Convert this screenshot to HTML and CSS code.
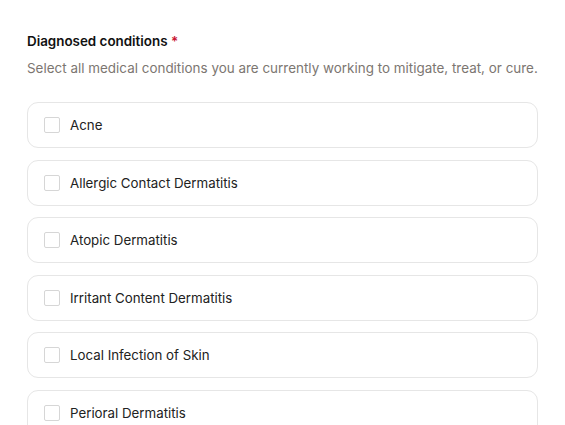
FILE: index.html
```html
<!DOCTYPE html>
<html>
<head>
<meta charset="utf-8">
<link rel="stylesheet" href="styles.css">
</head>
<body>
<div class="field">
  <div class="label">Diagnosed conditions <span class="req">*</span></div>
  <div class="hint">Select all medical conditions you are currently working to mitigate, treat, or cure.</div>
  <div class="options">
    <label class="option"><span class="box"></span><span class="text">Acne</span></label>
    <label class="option"><span class="box"></span><span class="text">Allergic Contact Dermatitis</span></label>
    <label class="option"><span class="box"></span><span class="text">Atopic Dermatitis</span></label>
    <label class="option"><span class="box"></span><span class="text">Irritant Content Dermatitis</span></label>
    <label class="option"><span class="box"></span><span class="text">Local Infection of Skin</span></label>
    <label class="option"><span class="box"></span><span class="text">Perioral Dermatitis</span></label>
  </div>
</div>
</body>
</html>
```
FILE: styles.css
```css
html, body {
  margin: 0;
  background: #fff;
}
body {
  font-family: Inter, "Liberation Sans", sans-serif;
  overflow: hidden;
}
.field {
  width: 511px;
  padding: 32px 0 0 27px;
}
.label {
  font-size: 13.4px;
  font-weight: 600;
  color: #111;
  line-height: 18px;
}
.req {
  color: #c8102e;
}
.hint {
  margin-top: 9px;
  font-size: 13.45px;
  color: #7c7671;
  line-height: 18px;
  white-space: nowrap;
}
.options {
  margin-top: 25px;
  display: flex;
  flex-direction: column;
  gap: 11.5px;
}
.option {
  display: flex;
  align-items: center;
  height: 44px;
  border: 1px solid #e6e6e6;
  border-radius: 11px;
  padding-left: 16px;
  gap: 10px;
}
.box {
  width: 14px;
  height: 14px;
  border: 1px solid #d6d6d6;
  border-radius: 2px;
}
.text {
  font-size: 13.3px;
  color: #222;
}
```
